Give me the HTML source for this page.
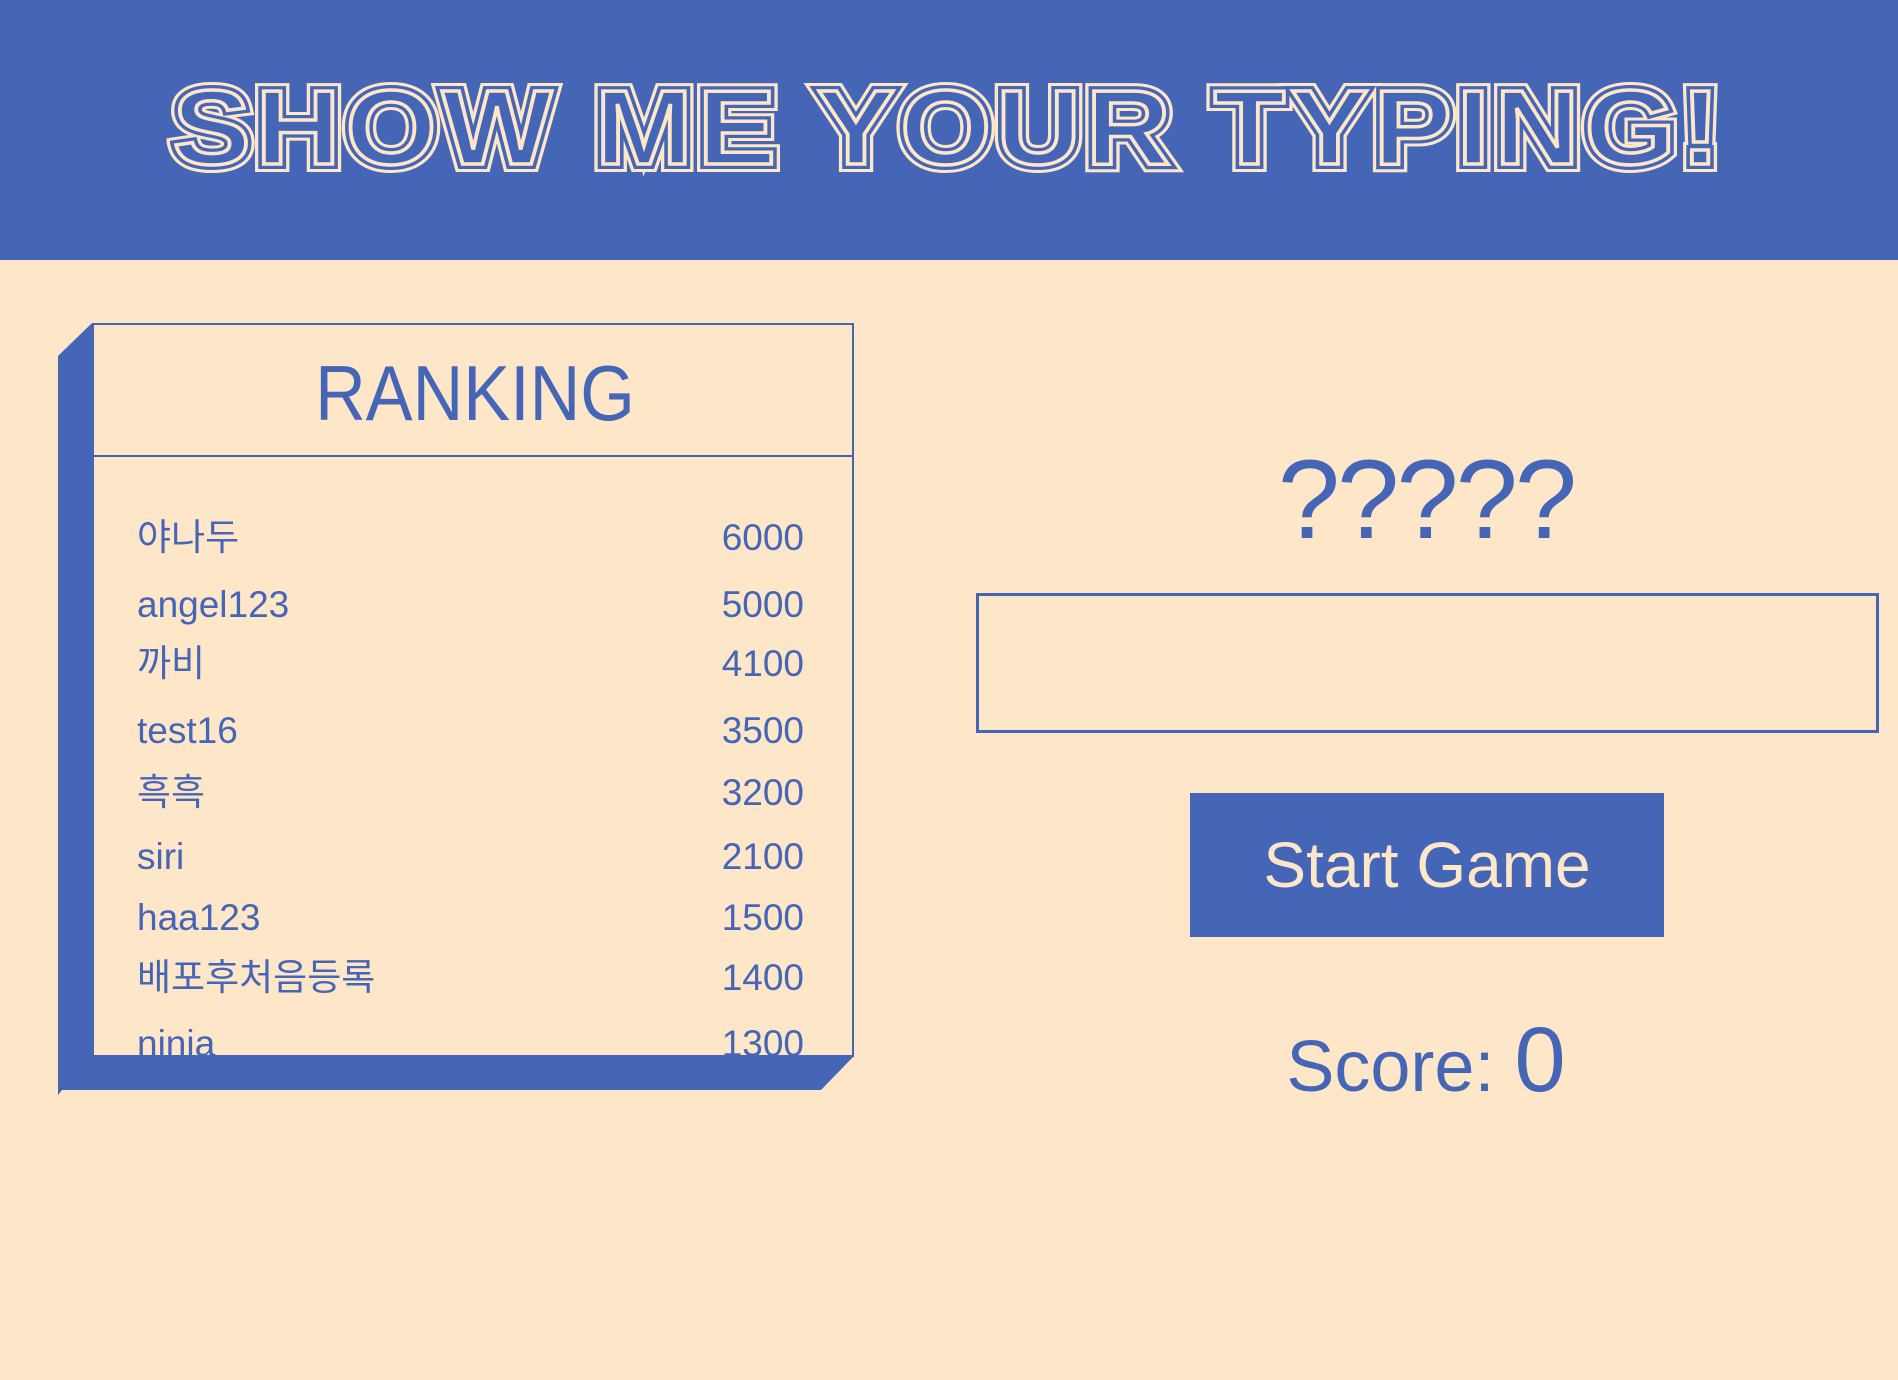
<!DOCTYPE html>
<html><head><meta charset="utf-8"><style>
*{margin:0;padding:0;box-sizing:border-box}
body{width:1898px;height:1380px;background:#fee6c8;position:relative;overflow:hidden;font-family:"Liberation Sans","Noto Sans CJK KR",sans-serif;color:#4565b6}
.hdr{position:absolute;left:0;top:0;width:1898px;height:260px;background:#4565b6}
.t{position:absolute;left:0;top:68px;width:1898px;text-align:center;font-size:106px;font-weight:bold;line-height:120px;white-space:nowrap;letter-spacing:5px;transform:scaleX(1.1)}
.l1{color:#fee6c8;-webkit-text-stroke:16px #fee6c8}
.l2{color:#4565b6;-webkit-text-stroke:10px #4565b6}
.l3{color:#4565b6;-webkit-text-stroke:3.5px #fee6c8}
.abs{position:absolute}
.box{left:92px;top:323px;width:762px;height:734px;border:2px solid #4565b6;overflow:hidden}
.sep{left:0;top:130px;width:100%;height:2px;background:#4565b6}
.row{position:absolute;left:45px;width:667px;font-size:37px;line-height:40px;display:flex;justify-content:space-between}
.q{left:1126px;top:440px;width:600px;text-align:center;font-size:112px;line-height:120px;letter-spacing:-3px}
.inp{left:976px;top:593px;width:903px;height:140px;border:3px solid #4565b6}
.btn{left:1190px;top:793px;width:474px;height:144px;background:#4565b6;color:#fee6c8;font-size:64px;text-align:center;line-height:144px}
.sc{left:1126px;top:1005px;width:600px;text-align:center;font-size:72px;line-height:110px}
</style></head><body>
<div class="hdr">
<div class="t l1">SHOW ME YOUR TYPING!</div>
<div class="t l2">SHOW ME YOUR TYPING!</div>
<div class="t l3">SHOW ME YOUR TYPING!</div>
</div>
<svg class="abs" style="left:0;top:0" width="1898" height="1380">
<polygon points="58,356 92,323 92,1056 854,1056 821,1090 62,1090 58,1095" fill="#4565b6"/>
</svg>
<div class="abs box">
<div class="abs" style="left:0;top:28px;width:762px;text-align:center;font-size:78px;line-height:80px;transform:scaleX(0.9)">RANKING</div>
<div class="abs sep"></div>
</div>
<div class="abs" style="left:92px;top:323px;width:762px;height:733px;overflow:hidden">
<div class="row" style="top:195px"><span>야나두</span><span>6000</span></div>
<div class="row" style="top:262px"><span>angel123</span><span>5000</span></div>
<div class="row" style="top:321px"><span>까비</span><span>4100</span></div>
<div class="row" style="top:388px"><span>test16</span><span>3500</span></div>
<div class="row" style="top:450px"><span>흑흑</span><span>3200</span></div>
<div class="row" style="top:514px"><span>siri</span><span>2100</span></div>
<div class="row" style="top:575px"><span>haa123</span><span>1500</span></div>
<div class="row" style="top:635px"><span>배포후처음등록</span><span>1400</span></div>
<div class="row" style="top:701px"><span>ninja</span><span>1300</span></div>
</div>
<div class="abs q">?????</div>
<div class="abs inp"></div>
<div class="abs btn">Start Game</div>
<div class="abs sc">Score: <span style="font-size:92px">0</span></div>
</body></html>
